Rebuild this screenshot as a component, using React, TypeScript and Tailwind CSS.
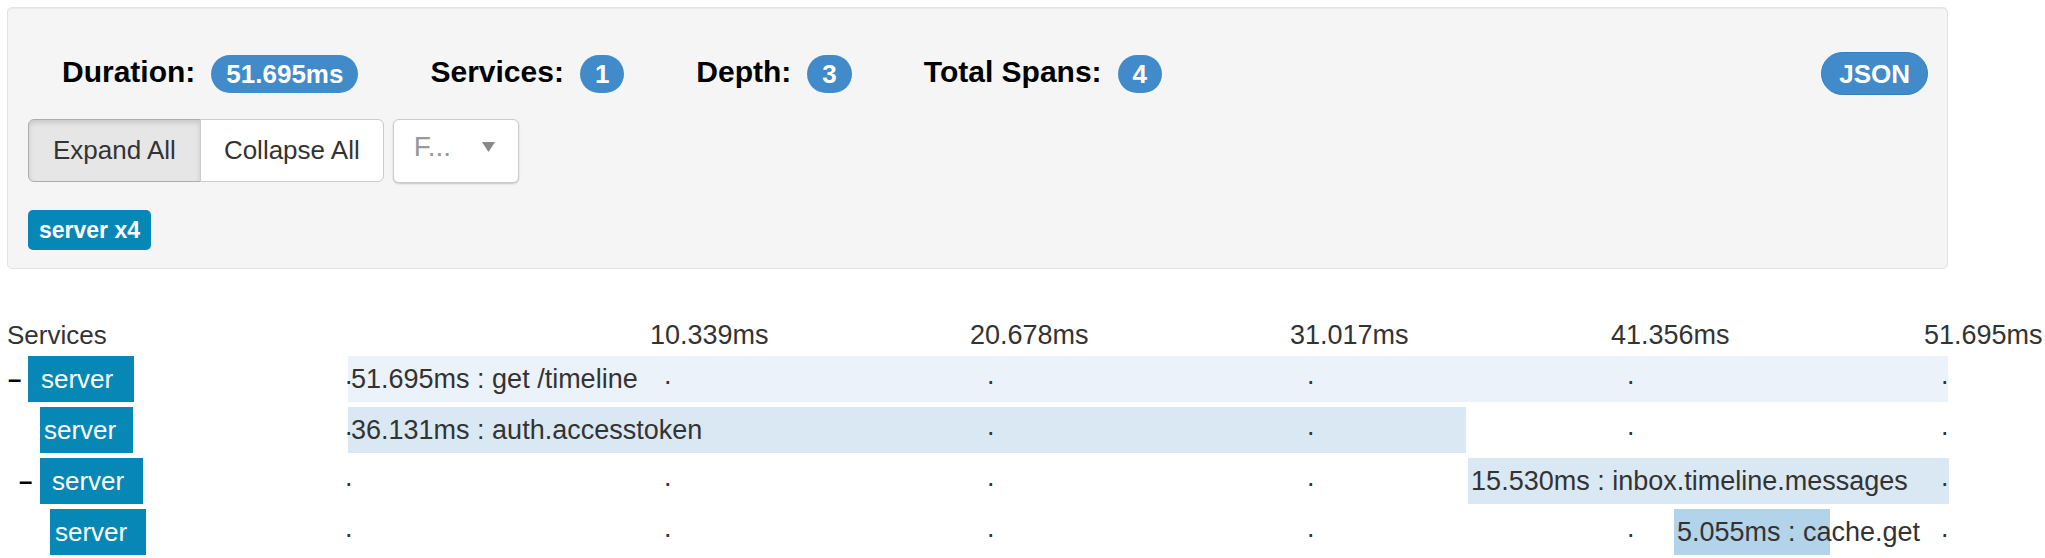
import React from "react";

type Span = {
  depth: number;
  expandable: boolean;
  start: number;
  duration: number;
  name: string;
  bar: string;
  hidden: number[]; // dot indexes covered by the label
};

const TOTAL = 51.695;
const TRACK = 1600;

const spans: Span[] = [
  { depth: 0, expandable: true, start: 0, duration: 51.695, name: "get /timeline", bar: "bg-[#ebf2f9]", hidden: [] },
  { depth: 1, expandable: false, start: 0, duration: 36.131, name: "auth.accesstoken", bar: "bg-[#dae8f4]", hidden: [1] },
  { depth: 1, expandable: true, start: 36.19, duration: 15.53, name: "inbox.timeline.messages", bar: "bg-[#dae8f4]", hidden: [4] },
  { depth: 2, expandable: false, start: 42.84, duration: 5.055, name: "cache.get", bar: "bg-[#b3d3ea]", hidden: [] },
];

const tickLabels = [
  { label: "10.339ms", left: 302 },
  { label: "20.678ms", left: 622 },
  { label: "31.017ms", left: 942 },
  { label: "41.356ms", left: 1263 },
  { label: "51.695ms", left: 1576 },
];

// dot centers inside the 1600px track
const dots = [1, 320, 643, 963, 1283, 1597];

function ServiceCell({ span }: { span: Span }) {
  // hand-tuned indents per depth
  if (span.depth === 0) {
    return (
      <div className="flex items-center h-full">
        <span className="ml-[8px] w-[20px] text-[24px] font-bold leading-none text-black">–</span>
        <span className="h-full flex items-center bg-[#0787b6] text-white pl-[13px] pr-[21px]">server</span>
      </div>
    );
  }
  if (span.expandable) {
    return (
      <div className="flex items-center h-full">
        <span className="ml-[19px] w-[21px] text-[24px] font-bold leading-none text-black">–</span>
        <span className="h-full flex items-center bg-[#0787b6] text-white pl-[12px] pr-[19px]">server</span>
      </div>
    );
  }
  return (
    <div className="flex items-center h-full">
      <span
        className={
          span.depth === 1
            ? "h-full flex items-center bg-[#0787b6] text-white ml-[40px] pl-[4px] pr-[17px]"
            : "h-full flex items-center bg-[#0787b6] text-white ml-[50px] pl-[5px] pr-[19px]"
        }
      >
        server
      </span>
    </div>
  );
}

function Stat({ label, value }: { label: string; value: string }) {
  return (
    <div className="flex items-center mr-[72px]">
      <span className="text-[30px] font-bold text-black leading-[34px] mb-[4px]">{label}</span>
      <span className="ml-[16px] h-[38px] px-[15px] rounded-full bg-[#428bca] text-white text-[26px] font-bold flex items-center leading-none">
        {value}
      </span>
    </div>
  );
}

export default function App() {
  return (
    <div className="w-[2045px] h-[558px] bg-white text-[#333] text-[26px] font-['Liberation_Sans',Arial,sans-serif] overflow-hidden">
      {/* summary well */}
      <div className="ml-[7px] mt-[7px] w-[1941px] bg-[#f5f5f5] border border-[#e3e3e3] rounded-[5px] shadow-[inset_0_1px_1px_rgba(0,0,0,0.05)] pt-[44px] pb-[18px]">
        <div className="flex items-center h-[43px] pl-[54px] pr-[19px]">
          <Stat label="Duration:" value="51.695ms" />
          <Stat label="Services:" value="1" />
          <Stat label="Depth:" value="3" />
          <Stat label="Total Spans:" value="4" />
          <button className="ml-auto h-[43px] px-[17px] rounded-full bg-[#428bca] border border-[#357ebd] text-white text-[26px] font-bold leading-none">
            JSON
          </button>
        </div>

        <div className="flex items-start mt-[24px] pl-[20px]">
          <div className="flex">
            <button className="h-[63px] px-[24px] bg-[#e6e6e6] border border-[#adadad] rounded-l-[6px] shadow-[inset_0_3px_5px_rgba(0,0,0,0.125)] text-[#333] text-[26px]">
              Expand All
            </button>
            <button className="-ml-px h-[63px] px-[23px] bg-white border border-[#ccc] rounded-r-[6px] text-[#333] text-[26px]">
              Collapse All
            </button>
          </div>
          <div className="ml-[9px] w-[126px] h-[64px] bg-white border border-[#ccc] rounded-[6px] shadow-[0_1px_2px_rgba(0,0,0,0.2)] flex items-center pl-[20px] pr-[23px] pb-[8px]">
            <span className="text-[#999] text-[28px]">F...</span>
            <svg className="ml-auto" width="13" height="10" viewBox="0 0 13 10">
              <polygon points="0,0 13,0 6.5,10" fill="#888" />
            </svg>
          </div>
        </div>

        <div className="mt-[27px] pl-[20px]">
          <span className="inline-flex items-center h-[40px] px-[11px] rounded-[5px] bg-[#0787b6] text-white text-[23px] font-bold">
            server x4
          </span>
        </div>
      </div>

      {/* timeline */}
      <div className="mt-[51px]">
        <div className="flex h-[30px] leading-[30px]">
          <div className="w-[348px] pl-[7px]">Services</div>
          <div className="relative w-[1600px] text-[27px]">
            {tickLabels.map((t) => (
              <span key={t.label} className="absolute top-0 whitespace-nowrap" style={{ left: t.left }}>
                {t.label}
              </span>
            ))}
          </div>
        </div>

        <div className="flex flex-col gap-[5px] mt-[6px]">
          {spans.map((s) => (
            <div key={s.name} className="flex h-[46px] leading-[30px]">
              <div className="w-[348px] h-full">
                <ServiceCell span={s} />
              </div>
              <div className="relative w-[1600px] h-full text-[27px]">
                <div
                  className={`absolute top-0 h-full ${s.bar}`}
                  style={{
                    left: (s.start / TOTAL) * TRACK,
                    width: (s.duration / TOTAL) * TRACK,
                  }}
                />
                {dots.map((d, i) =>
                  s.hidden.includes(i) ? null : (
                    <span key={d} className="absolute top-[4px]" style={{ left: d - 4 }}>
                      .
                    </span>
                  )
                )}
                <span
                  className="absolute top-[8px] whitespace-nowrap pl-[3px]"
                  style={{ left: (s.start / TOTAL) * TRACK }}
                >
                  {s.duration.toFixed(3)}ms : {s.name}
                </span>
              </div>
            </div>
          ))}
        </div>
      </div>
    </div>
  );
}
